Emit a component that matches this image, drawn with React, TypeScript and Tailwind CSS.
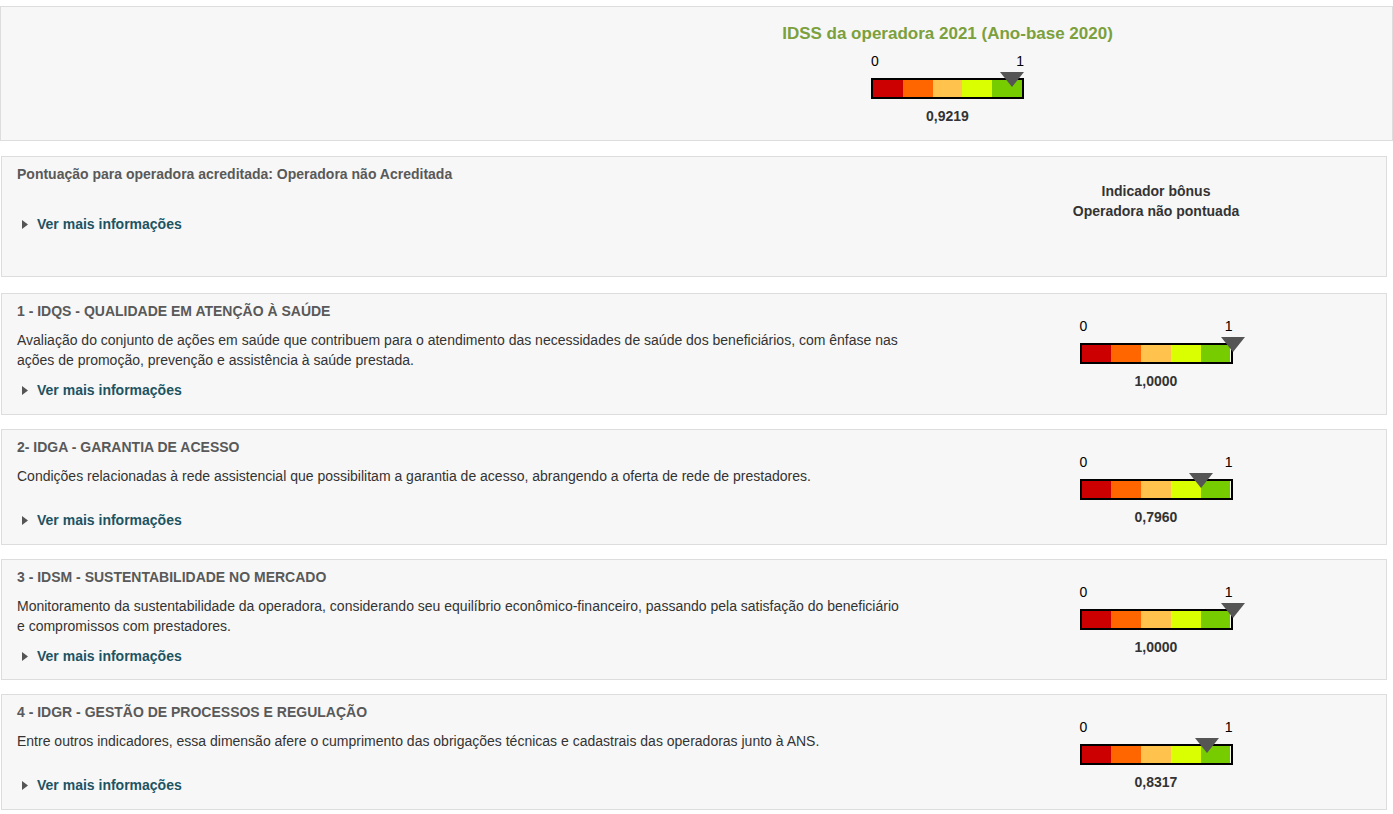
const segments = ["#cc0000", "#ff6600", "#ffc34d", "#d9ff00", "#77cc00"];

function Gauge({ value }: { value: number }) {
  const label = value.toFixed(4).replace(".", ",");
  return (
    <div className="flex w-[153px] flex-col">
      <div className="flex h-[16px] items-center justify-between text-[14px] leading-[16px] text-black">
        <span>0</span>
        <span>1</span>
      </div>
      <div className="relative mt-[9px]">
        <div className="flex h-[21px] border-2 border-black">
          {segments.map((c) => (
            <div key={c} className="flex-1" style={{ backgroundColor: c }} />
          ))}
        </div>
        <svg
          className="absolute top-[-6px]"
          style={{ left: value * 153 - 12 }}
          width="24"
          height="15"
          viewBox="0 0 24 15"
        >
          <polygon points="0,0 24,0 12,15" fill="#555555" />
        </svg>
      </div>
      <div className="mt-[9px] text-center text-[14px] font-bold leading-[16px] text-[#333]">
        {label}
      </div>
    </div>
  );
}

function VerMais({ className = "" }: { className?: string }) {
  return (
    <div className={`flex items-center pl-[5px] text-[14px] font-bold leading-[20px] text-[#1d5362] ${className}`}>
      <svg width="6" height="9" viewBox="0 0 6 9" className="mr-[9px]">
        <polygon points="0,0 6,4.5 0,9" fill="#555" />
      </svg>
      Ver mais informações
    </div>
  );
}

const dims = [
  {
    title: "1 - IDQS - QUALIDADE EM ATENÇÃO À SAÚDE",
    desc: "Avaliação do conjunto de ações em saúde que contribuem para o atendimento das necessidades de saúde dos beneficiários, com ênfase nas ações de promoção, prevenção e assistência à saúde prestada.",
    lines: 2,
    value: 1,
    h: "h-[122px]",
  },
  {
    title: "2- IDGA - GARANTIA DE ACESSO",
    desc: "Condições relacionadas à rede assistencial que possibilitam a garantia de acesso, abrangendo a oferta de rede de prestadores.",
    lines: 1,
    value: 0.796,
    h: "h-[116px]",
  },
  {
    title: "3 - IDSM - SUSTENTABILIDADE NO MERCADO",
    desc: "Monitoramento da sustentabilidade da operadora, considerando seu equilíbrio econômico-financeiro, passando pela satisfação do beneficiário e compromissos com prestadores.",
    lines: 2,
    value: 1,
    h: "h-[121px]",
  },
  {
    title: "4 - IDGR - GESTÃO DE PROCESSOS E REGULAÇÃO",
    desc: "Entre outros indicadores, essa dimensão afere o cumprimento das obrigações técnicas e cadastrais das operadoras junto à ANS.",
    lines: 1,
    value: 0.8317,
    h: "h-[116px]",
  },
];

export default function App() {
  return (
    <div className="min-h-screen bg-white pt-[6px] font-['Liberation_Sans',Arial,sans-serif]">
      <div className="flex h-[135px] border border-[#dddddd] bg-[#f7f7f7]">
        <div className="w-[502px]" />
        <div className="flex flex-1 flex-col items-center pt-[16px]">
          <div className="text-[17px] font-bold leading-[22px] text-[#7ba03c]">
            IDSS da operadora 2021 (Ano-base 2020)
          </div>
          <div className="mt-[8px]">
            <Gauge value={0.9219} />
          </div>
        </div>
      </div>

      <div className="ml-px mr-[6px] mt-[15px] flex flex-col">
        <div className="flex h-[121px] border border-[#dddddd] bg-[#f7f7f7]">
          <div className="w-[924px] pl-[15px] pt-[7px]">
            <div className="text-[14px] font-bold leading-[20px] text-[#595959]">
              Pontuação para operadora acreditada: Operadora não Acreditada
            </div>
            <VerMais className="mt-[30px]" />
          </div>
          <div className="flex flex-1 flex-col items-center pt-[24px] text-[14px] font-bold leading-[20px] text-[#333]">
            <div>Indicador bônus</div>
            <div>Operadora não pontuada</div>
          </div>
        </div>

        <div className="mt-[16px] flex flex-col gap-[14px]">
          {dims.map((d) => (
            <div key={d.title} className={`flex ${d.h} border border-[#dddddd] bg-[#f7f7f7]`}>
              <div className="w-[924px] pl-[15px] pt-[7px]">
                <div className="text-[14px] font-bold leading-[20px] text-[#595959]">{d.title}</div>
                <div className="mt-[9px] w-[885px] text-[14px] leading-[20px] text-[#333]">{d.desc}</div>
                <VerMais className={d.lines === 2 ? "mt-[10px]" : "mt-[24px]"} />
              </div>
              <div className="flex flex-1 justify-center pt-[24px]">
                <Gauge value={d.value} />
              </div>
            </div>
          ))}
        </div>
      </div>
    </div>
  );
}
